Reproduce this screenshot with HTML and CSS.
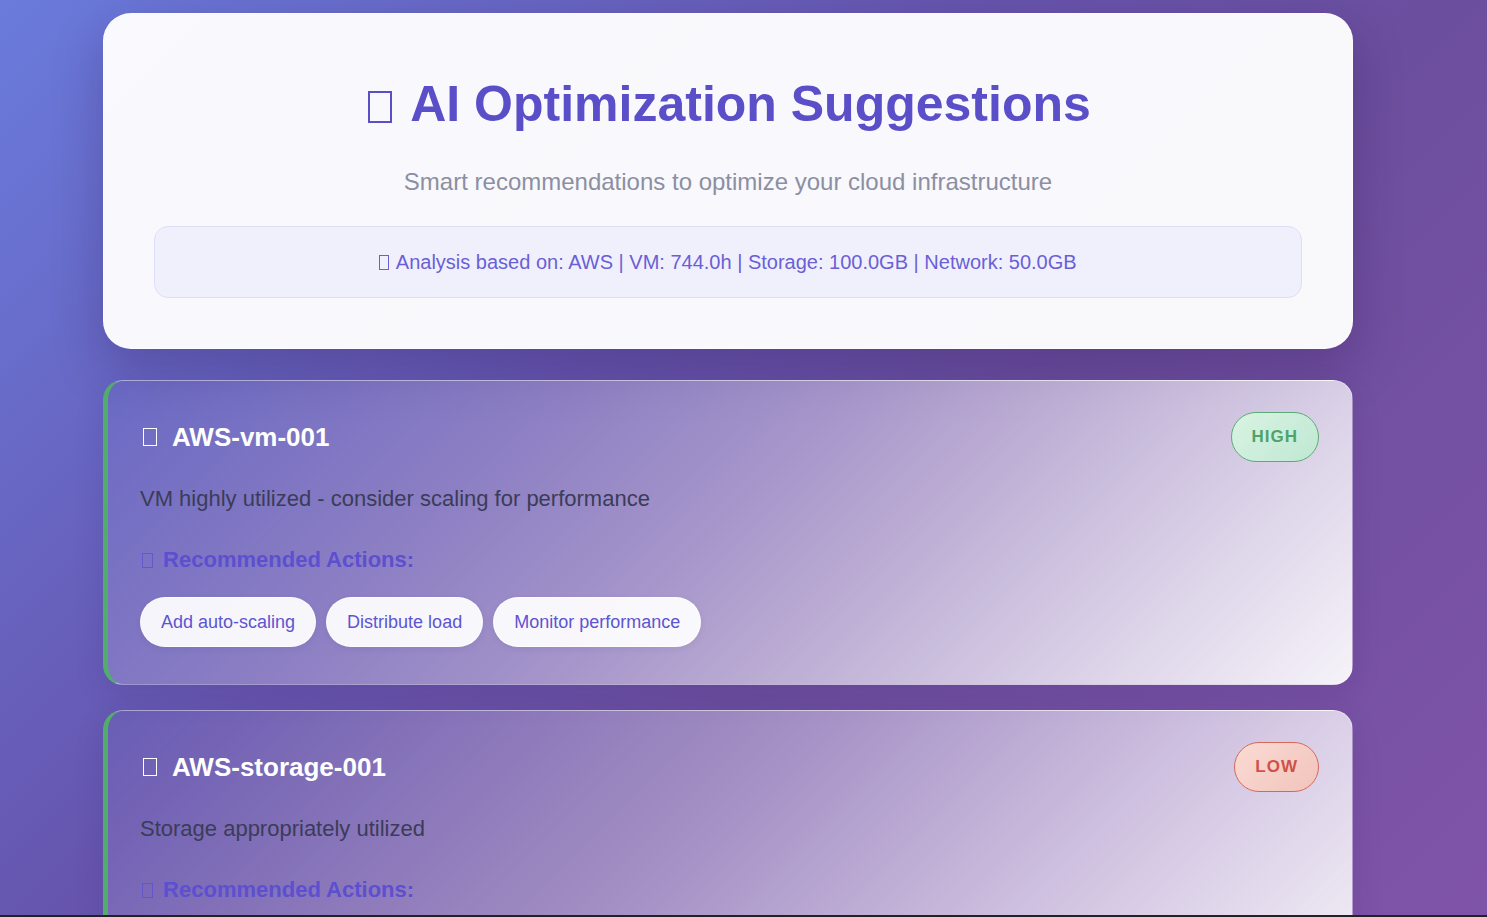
FILE: index.html
```html
<!DOCTYPE html>
<html lang="en">
<head>
<meta charset="utf-8">
<title>AI Optimization Suggestions</title>
<link rel="stylesheet" href="styles.css">
</head>
<body>
<div class="page">
  <header class="hero">
    <h1 class="hero-title"><span class="tofu tofu-title"></span> AI Optimization Suggestions</h1>
    <p class="hero-sub">Smart recommendations to optimize your cloud infrastructure</p>
    <div class="analysis"><span class="tofu tofu-small"></span> Analysis based on: AWS | VM: 744.0h | Storage: 100.0GB | Network: 50.0GB</div>
  </header>

  <section class="card">
    <div class="card-head">
      <h2 class="card-title"><span class="tofu tofu-card"></span><span>AWS-vm-001</span></h2>
      <span class="badge badge-high">HIGH</span>
    </div>
    <p class="card-desc">VM highly utilized - consider scaling for performance</p>
    <h3 class="actions-title"><span class="tofu tofu-act"></span> Recommended Actions:</h3>
    <div class="chips">
      <span class="chip">Add auto-scaling</span>
      <span class="chip">Distribute load</span>
      <span class="chip">Monitor performance</span>
    </div>
  </section>

  <section class="card">
    <div class="card-head">
      <h2 class="card-title"><span class="tofu tofu-card"></span><span>AWS-storage-001</span></h2>
      <span class="badge badge-low">LOW</span>
    </div>
    <p class="card-desc">Storage appropriately utilized</p>
    <h3 class="actions-title"><span class="tofu tofu-act"></span> Recommended Actions:</h3>
    <div class="chips chips-empty"></div>
  </section>
</div>
<div class="screen-edge"></div>
</body>
</html>
```
FILE: styles.css
```css
html, body {
  margin: 0;
  padding: 0;
}
body {
  font-family: "Liberation Sans", Arial, sans-serif;
  background: linear-gradient(135deg, #6a7bdc 0%, #6655ae 40%, #6c4e9e 60%, #7f54a8 100%);
  background-attachment: fixed;
  min-height: 100vh;
}
.page {
  width: 1250px;
  padding: 13px 0 40px 103px;
  display: flex;
  flex-direction: column;
}
.hero {
  background: rgba(255, 255, 255, 0.96);
  border: 1px solid rgba(255, 255, 255, 0.6);
  border-radius: 28px;
  padding: 50px;
  text-align: center;
  box-shadow: 0 20px 50px rgba(30, 10, 70, 0.25);
  margin-bottom: 31px;
}
.hero-title {
  margin: 9px 0 0;
  font-size: 50px;
  line-height: 62px;
  font-weight: 700;
  color: #5a4fc9;
}
.tofu {
  display: inline-block;
  box-sizing: border-box;
  border: 1.5px solid currentColor;
  vertical-align: baseline;
}
.tofu-title {
  width: 24px;
  height: 32px;
  border-width: 2px;
  margin-left: 3px;
  margin-right: 6px;
  vertical-align: -2px;
}
.hero-sub {
  margin: 30px 0 0;
  font-size: 24px;
  line-height: 33px;
  color: #8b8fa3;
}
.analysis {
  margin-top: 28px;
  background: #f0f0fd;
  border: 1px solid #e0ddf7;
  border-radius: 14px;
  padding: 20px;
  font-size: 20px;
  line-height: 30px;
  color: #6a5fd6;
}
.tofu-small {
  width: 10px;
  height: 15px;
  border-width: 1px;
  margin-right: 2px;
  vertical-align: -1px;
}
.card {
  position: relative;
  border-radius: 20px;
  border: 1px solid rgba(255, 255, 255, 0.35);
  border-left: 5px solid #52ad6c;
  padding: 31px 33px 37px 32px;
  margin-bottom: 25px;
  background: linear-gradient(135deg, rgba(250, 245, 255, 0.02) 0%, rgba(248, 244, 255, 0.42) 48%, rgba(255, 255, 255, 0.93) 100%);
  box-shadow: 0 10px 30px rgba(40, 20, 90, 0.12);
}
.card-head {
  display: flex;
  align-items: center;
  justify-content: space-between;
  height: 50px;
}
.card-title {
  margin: 0;
  display: flex;
  align-items: center;
  gap: 15px;
  font-size: 26px;
  font-weight: 700;
  color: #ffffff;
}
.tofu-card {
  width: 14px;
  height: 18px;
  margin-left: 3px;
  border-width: 1.5px;
}
.badge {
  box-sizing: border-box;
  height: 50px;
  display: inline-flex;
  align-items: center;
  padding: 0 20px;
  border-radius: 25px;
  font-size: 17px;
  font-weight: 700;
  letter-spacing: 1px;
}
.badge-high {
  color: #4ea36b;
  border: 1px solid #5cab74;
  background: linear-gradient(135deg, #d9f3e3 0%, #bfe8d3 100%);
}
.badge-low {
  color: #cf5147;
  border: 1px solid #d6675d;
  background: linear-gradient(135deg, #fadbd3 0%, #f1c4bc 100%);
}
.card-desc {
  margin: 21px 0 0;
  font-size: 22px;
  line-height: 32px;
  color: #3b3c58;
}
.actions-title {
  margin: 30px 0 0;
  font-size: 22px;
  line-height: 29px;
  font-weight: 700;
  color: #5c4fd0;
}
.tofu-act {
  width: 11px;
  height: 15px;
  border-width: 1px;
  margin-left: 2px;
  margin-right: 4px;
  opacity: 0.75;
  vertical-align: -1px;
}
.chips {
  margin-top: 23px;
  display: flex;
  gap: 10px;
  flex-wrap: wrap;
}
.chips-empty {
  height: 50px;
}
.chip {
  box-sizing: border-box;
  height: 50px;
  display: inline-flex;
  align-items: center;
  padding: 0 20px;
  border-radius: 25px;
  background: rgba(255, 255, 255, 0.93);
  border: 1px solid rgba(255, 255, 255, 0.8);
  font-size: 18px;
  color: #5c55d2;
  box-shadow: 0 2px 6px rgba(60, 40, 120, 0.08);
}
.screen-edge {
  position: fixed;
  left: 0;
  right: 0;
  bottom: 0;
  height: 2px;
  background: #222226;
}
```
